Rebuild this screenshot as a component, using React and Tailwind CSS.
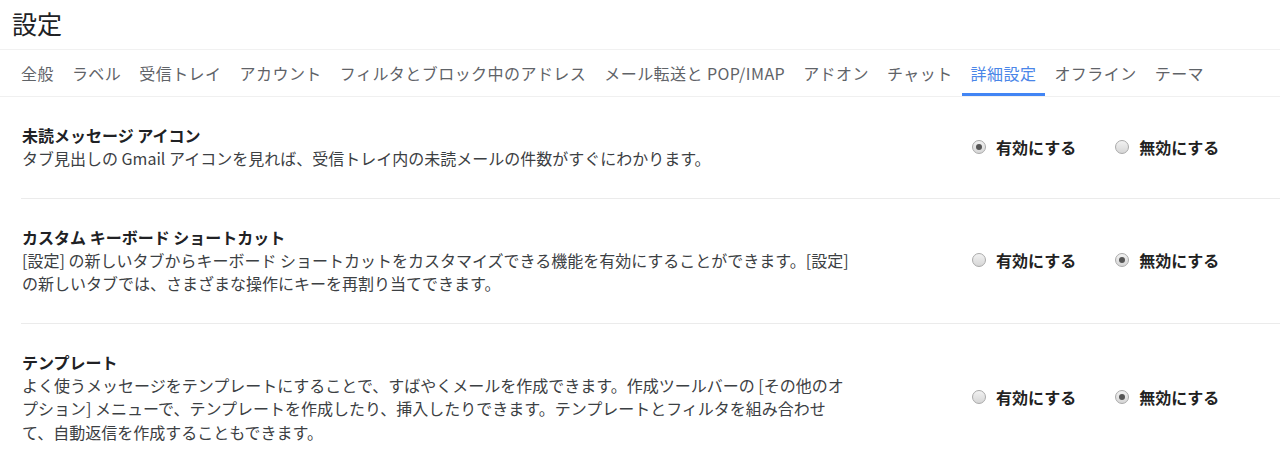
const tabs = [
  "全般",
  "ラベル",
  "受信トレイ",
  "アカウント",
  "フィルタとブロック中のアドレス",
  "メール転送と POP/IMAP",
  "アドオン",
  "チャット",
  "詳細設定",
  "オフライン",
  "テーマ",
];

const settings = [
  {
    title: "未読メッセージ アイコン",
    lines: ["タブ見出しの Gmail アイコンを見れば、受信トレイ内の未読メールの件数がすぐにわかります。"],
    enabled: true,
  },
  {
    title: "カスタム キーボード ショートカット",
    lines: [
      "[設定] の新しいタブからキーボード ショートカットをカスタマイズできる機能を有効にすることができます。[設定]",
      "の新しいタブでは、さまざまな操作にキーを再割り当てできます。",
    ],
    enabled: false,
  },
  {
    title: "テンプレート",
    lines: [
      "よく使うメッセージをテンプレートにすることで、すばやくメールを作成できます。作成ツールバーの [その他のオ",
      "プション] メニューで、テンプレートを作成したり、挿入したりできます。テンプレートとフィルタを組み合わせ",
      "て、自動返信を作成することもできます。",
    ],
    enabled: false,
  },
];

function Radio({ checked, label }) {
  return (
    <label className="flex items-center gap-[10px]">
      <span className="w-[14px] h-[14px] rounded-full border border-[#aaa] bg-gradient-to-b from-[#f2f2f2] to-[#d6d6d6] flex items-center justify-center">
        {checked && <span className="w-[6px] h-[6px] rounded-full bg-[#555]"></span>}
      </span>
      <span className="text-[16px] font-bold text-[#222]">{label}</span>
    </label>
  );
}

export default function App() {
  return (
    <div
      className="w-[1280px] h-[464px] bg-white overflow-hidden"
      style={{ fontFamily: '"Noto Sans CJK JP", "Noto Sans", sans-serif' }}
    >
      {/* Title */}
      <div className="h-[50px] pl-[12px] pt-[5px] border-b border-[#f1f1f1]">
        <h1 className="text-[25px] leading-[36px] text-[#202124]">設定</h1>
      </div>

      {/* Tabs */}
      <div className="h-[47px] flex pl-[12px] border-b border-[#f0f0f0]">
        {tabs.map((tab) => {
          const active = tab === "詳細設定";
          return (
            <div
              key={tab}
              className={
                active
                  ? "h-full px-[9px] flex items-center text-[16px] tracking-[0.45px] text-[#4a86e8] border-b-[3px] border-[#4285f4] pt-[3px]"
                  : "h-full px-[9px] flex items-center text-[16px] tracking-[0.45px] text-[#5f6368] pt-0"
              }
            >
              {tab}
            </div>
          );
        })}
      </div>

      {/* Settings */}
      <div className="ml-[21px]">
        {settings.map((s) => (
          <div key={s.title} className="flex items-center pl-[1px] pt-[26px] pb-[27px] border-b border-[#ebebeb]">
            <div className="flex-1">
              <div className="text-[16px] leading-[24px] font-bold text-[#202124]">{s.title}</div>
              <div className="text-[16px] leading-[23.5px] text-[#3c4043] whitespace-nowrap">
                {s.lines.map((l, i) => (
                  <div key={i}>{l}</div>
                ))}
              </div>
            </div>
            <div className="w-[308px] flex items-center gap-[39px]">
              <Radio checked={s.enabled} label="有効にする" />
              <Radio checked={!s.enabled} label="無効にする" />
            </div>
          </div>
        ))}
      </div>
    </div>
  );
}
